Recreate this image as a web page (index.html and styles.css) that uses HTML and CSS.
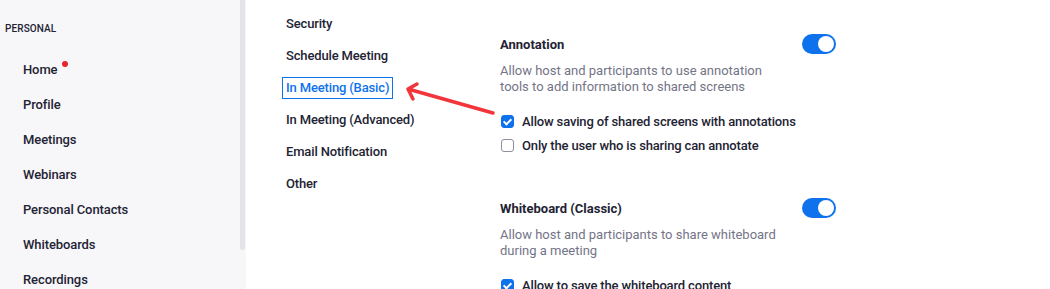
FILE: index.html
```html
<!DOCTYPE html>
<html>
    <head>
        <meta charset="utf-8" />
        <title>Settings - In Meeting (Basic)</title>
        <link rel="stylesheet" href="styles.css">
    </head>
    <body>
        <div class="page">
            <aside class="sidebar">
                <div class="section-label">PERSONAL</div>
                <ul class="side-nav">
                    <li>Home<span class="dot"></span></li>
                    <li>Profile</li>
                    <li>Meetings</li>
                    <li>Webinars</li>
                    <li>Personal Contacts</li>
                    <li>Whiteboards</li>
                    <li>Recordings</li>
                </ul>
                <div class="scroll-thumb"></div>
            </aside>

            <nav class="sub-nav">
                <div class="sub-item">Security</div>
                <div class="sub-item">Schedule Meeting</div>
                <div class="sub-item"><span class="active">In Meeting (Basic)</span></div>
                <div class="sub-item">In Meeting (Advanced)</div>
                <div class="sub-item">Email Notification</div>
                <div class="sub-item">Other</div>
            </nav>

            <main class="settings">
                <section class="setting">
                    <div class="setting-head">
                        <h3>Annotation</h3>
                        <span class="toggle on"></span>
                    </div>
                    <p class="setting-desc">Allow host and participants to use annotation<br>tools to add information to shared screens</p>
                    <div class="options">
                        <label class="check"><span class="box checked"></span>Allow saving of shared screens with annotations</label>
                        <label class="check"><span class="box"></span>Only the user who is sharing can annotate</label>
                    </div>
                </section>
                <section class="setting">
                    <div class="setting-head">
                        <h3>Whiteboard (Classic)</h3>
                        <span class="toggle on"></span>
                    </div>
                    <p class="setting-desc">Allow host and participants to share whiteboard<br>during a meeting</p>
                    <div class="options">
                        <label class="check"><span class="box checked"></span>Allow to save the whiteboard content</label>
                    </div>
                </section>
            </main>

            <!-- red callout arrow pointing at the active tab -->
            <svg class="callout" width="100" height="40" viewBox="400 80 100 40">
                <path d="M493 113 L408 89 M408 89 L417 84 M408 89 L413 99" />
            </svg>
        </div>
    </body>
</html>
```

FILE: styles.css
```css
* {
    box-sizing: border-box;
}
body {
    margin: 0;
    background: #ffffff;
    color: #232333;
    font-family: Roboto, "Liberation Sans", Arial, sans-serif;
    font-size: 13px;
}
.page {
    position: relative;
    display: flex;
    height: 289px;
    overflow: hidden;
}
.sidebar {
    position: relative;
    width: 246px;
    flex-shrink: 0;
    background: #f7f7fa;
    padding-top: 22px;
}
.section-label {
    padding-left: 5px;
    font-size: 10px;
    line-height: 14px;
    font-weight: 500;
    letter-spacing: 0.1px;
}
.side-nav {
    list-style: none;
    margin: 16px 0 0;
    padding: 0 0 0 23px;
}
.side-nav li {
    line-height: 35px;
    font-weight: 500;
    letter-spacing: -0.1px;
}
.dot {
    display: inline-block;
    width: 6px;
    height: 6px;
    border-radius: 50%;
    background: #e8232b;
    margin-left: 4px;
    vertical-align: 7px;
}
.scroll-thumb {
    position: absolute;
    top: 0;
    right: 1px;
    width: 5px;
    height: 250px;
    background: #e4e4e8;
    border-radius: 0 0 2px 2px;
}
.sub-nav {
    width: 254px;
    flex-shrink: 0;
    padding: 8px 0 0 36px;
}
.sub-item {
    line-height: 32px;
    padding-left: 4px;
    font-weight: 500;
    letter-spacing: -0.15px;
}
.sub-item .active {
    display: inline-block;
    margin-left: -4px;
    padding: 0 3px;
    line-height: 20px;
    border: 1px solid #0e72ed;
    color: #0e72ed;
}
.settings {
    width: 336px;
    padding-top: 34px;
}
.setting + .setting {
    margin-top: 41px;
}
.setting-head {
    display: flex;
    justify-content: space-between;
    align-items: center;
    height: 20px;
}
.setting-head h3 {
    margin: 0;
    font-size: 13px;
    font-weight: 700;
}
.toggle {
    position: relative;
    width: 34px;
    height: 20px;
    border-radius: 10px;
    background: #c1c1c9;
}
.toggle::after {
    content: "";
    position: absolute;
    top: 2px;
    left: 2px;
    width: 16px;
    height: 16px;
    border-radius: 50%;
    background: #ffffff;
}
.toggle.on {
    background: #0e72ed;
}
.toggle.on::after {
    left: 16px;
}
.setting-desc {
    margin: 9px 0 0;
    line-height: 16px;
    color: #747487;
}
.options {
    margin-top: 14px;
}
.check {
    display: flex;
    align-items: center;
    height: 24px;
    gap: 8px;
    font-weight: 500;
    letter-spacing: -0.15px;
}
.box {
    width: 13px;
    height: 13px;
    border: 1px solid #8e8e9c;
    border-radius: 3px;
    margin-left: 1px;
    position: relative;
}
.box.checked {
    background: #0e72ed;
    border-color: #0e72ed;
}
.box.checked::after {
    content: "";
    position: absolute;
    left: 3px;
    top: 1px;
    width: 3px;
    height: 6px;
    border: solid #ffffff;
    border-width: 0 2px 2px 0;
    transform: rotate(45deg);
}
.callout {
    position: absolute;
    left: 400px;
    top: 80px;
}
.callout path {
    fill: none;
    stroke: #f2353a;
    stroke-width: 3.5;
    stroke-linecap: round;
    stroke-linejoin: round;
}
```
